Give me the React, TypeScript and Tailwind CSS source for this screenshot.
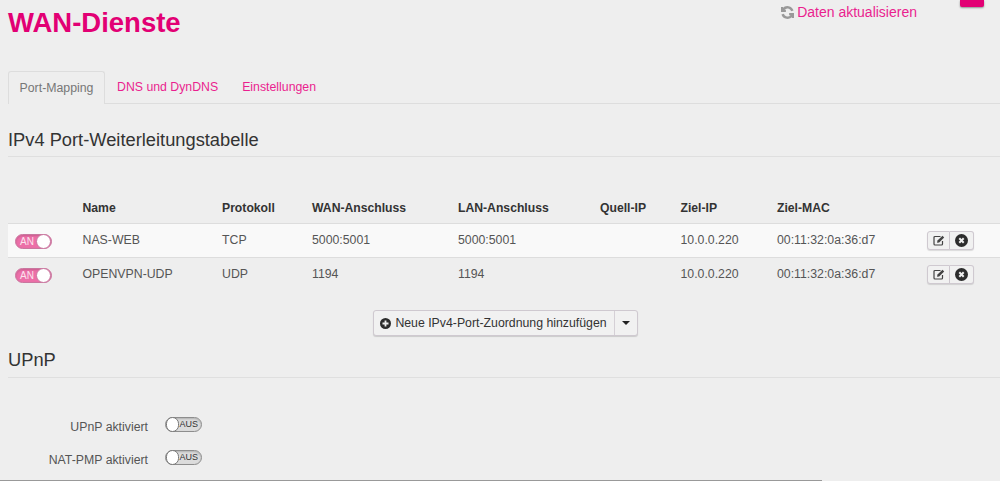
import React from "react";

const cols = "grid grid-cols-[74.5px_139.5px_90px_146px_142px_80.5px_96.5px_150px_1fr]";

function SwitchOn() {
  return (
    <div className="ml-[7px] mt-[2px] flex h-[15px] w-[37px] items-center justify-between rounded-full border border-[#c9779f] bg-[#ec6fa8] pl-[4px] shadow-[inset_0_1px_2px_rgba(0,0,0,0.15)]">
      <span className="text-[10px] leading-none text-[#fbe3ee]">AN</span>
      <span className="h-[15px] w-[15px] rounded-full border border-[#c9779f] bg-white" />
    </div>
  );
}

function SwitchOff() {
  return (
    <div className="flex h-[15px] w-[37px] items-center justify-between rounded-full border border-[#8d8d8d] bg-[#dcdcdc] pr-[3px] shadow-[inset_0_1px_2px_rgba(0,0,0,0.2)]">
      <span className="h-[15px] w-[15px] rounded-full border border-[#777] bg-white" />
      <span className="text-[9px] leading-none text-[#333]">AUS</span>
    </div>
  );
}

function EditIcon() {
  return (
    <svg width="12" height="11" viewBox="0 0 12 11" fill="none">
      <path d="M7.5 1.500H2A1 1 0 0 0 1 2.500V9a1 1 0 0 0 1 1h6.500a1 1 0 0 0 1-1V6" stroke="#444" strokeWidth="1.200" />
      <path d="M4.500 5.500 9.500 0.800 11.200 2.400 6.200 7.400 4 7.800Z" fill="#444" />
    </svg>
  );
}

function CloseIcon() {
  return (
    <svg width="13" height="13" viewBox="0 0 13 13">
      <circle cx="6.500" cy="6.500" r="6.500" fill="#2c2c2c" />
      <path d="M4.300 4.300 8.700 8.700M8.700 4.300 4.300 8.700" stroke="#eee" strokeWidth="2" />
    </svg>
  );
}

function ActionButtons() {
  return (
    <div className="flex">
      <button className="flex h-[19px] w-[23px] items-center justify-center rounded-l-[3px] border border-[#cfc9d0] bg-[#f1f1f1] shadow-[0_1px_1px_rgba(0,0,0,0.12)]">
        <EditIcon />
      </button>
      <button className="flex h-[19px] w-[24px] items-center justify-center rounded-r-[3px] border border-l-0 border-[#cfc9d0] bg-[#f1f1f1] shadow-[0_1px_1px_rgba(0,0,0,0.12)]">
        <CloseIcon />
      </button>
    </div>
  );
}

function Row({ name, proto, wan, lan, light }: { name: string; proto: string; wan: string; lan: string; light?: boolean }) {
  return (
    <div className={`${cols} h-[34px] items-center border-t border-[#dddddd] text-[12.3px] text-[#555] ${light ? "bg-[#f9f9f9]" : ""}`}>
      <SwitchOn />
      <span>{name}</span>
      <span>{proto}</span>
      <span>{wan}</span>
      <span>{lan}</span>
      <span />
      <span>10.0.0.220</span>
      <span>00:11:32:0a:36:d7</span>
      <ActionButtons />
    </div>
  );
}

export default function App() {
  return (
    <div className="h-[481px] w-[1000px] overflow-hidden bg-[#eeeeee] font-['Liberation_Sans',Arial,sans-serif]">
      <div className="h-[480px] pl-2">
        <header className="flex h-[71px] items-start justify-between">
          <h1 className="mt-[5px] text-[27.5px] font-bold leading-[36px] text-[#e20074]">WAN-Dienste</h1>
          <div className="flex items-start">
            <a className="mt-[3px] flex items-center gap-[3px] text-sm leading-[18px] text-[#ea1f8f]">
              <svg width="13" height="13" viewBox="0 0 24 24" fill="none" stroke="#999" strokeWidth="4.500">
                <path d="M21 9a9.500 9.500 0 0 0-16.500-3L2 9" />
                <path d="M2 2v7h7" />
                <path d="M3 15a9.500 9.500 0 0 0 16.500 3l2.500-3" />
                <path d="M22 22v-7h-7" />
              </svg>
              Daten aktualisieren
            </a>
            <div className="ml-[43px] mr-4 h-[7px] w-6 rounded-b-[2px] bg-[#e20074] shadow-[0_1px_2px_rgba(0,0,0,0.4)]" />
          </div>
        </header>

        <nav className="flex h-[33px] border-b border-[#dddddd] text-[12.3px]">
          <a className="-mb-px flex h-[33px] w-[97px] items-center justify-center rounded-t-[3px] border border-b-0 border-[#dddddd] bg-[#eeeeee] text-[#777]">
            Port-Mapping
          </a>
          <a className="ml-[12px] flex items-center text-[#ea1f8f]">DNS und DynDNS</a>
          <a className="ml-[24px] flex items-center text-[#ea1f8f]">Einstellungen</a>
        </nav>

        <h2 className="mt-[24px] border-b border-[#dfdfdf] pb-[4px] text-[18.3px] leading-[24px] text-[#333]">
          IPv4 Port-Weiterleitungstabelle
        </h2>

        <div className="mt-[35px]">
          <div className={`${cols} h-[31px] items-center pt-[2px] text-[12.2px] font-bold text-[#333]`}>
            <span />
            <span>Name</span>
            <span>Protokoll</span>
            <span>WAN-Anschluss</span>
            <span>LAN-Anschluss</span>
            <span>Quell-IP</span>
            <span>Ziel-IP</span>
            <span>Ziel-MAC</span>
            <span />
          </div>
          <Row name="NAS-WEB" proto="TCP" wan="5000:5001" lan="5000:5001" light />
          <Row name="OPENVPN-UDP" proto="UDP" wan="1194" lan="1194" />
        </div>

        <div className="mt-[19px] flex justify-center pl-[2px]">
          <div className="flex h-[26px] rounded-[3px] border border-[#cfc9d0] bg-[#f1f1f1] text-[12.3px] text-[#333] shadow-[0_1px_1px_rgba(0,0,0,0.15)]">
            <button className="flex w-[241px] items-center justify-center gap-[4px] border-r border-[#d5d0d6]">
              <svg width="11" height="11" viewBox="0 0 11 11">
                <circle cx="5.500" cy="5.500" r="5.500" fill="#2c2c2c" />
                <path d="M5.500 2.500v6M2.500 5.500h6" stroke="#eee" strokeWidth="1.800" />
              </svg>
              Neue IPv4-Port-Zuordnung hinzufügen
            </button>
            <button className="flex w-[22px] items-center justify-center">
              <span className="border-x-[4px] border-t-[4px] border-x-transparent border-t-[#222]" />
            </button>
          </div>
        </div>

        <h2 className="mt-[12px] border-b border-[#dfdfdf] pb-[5px] text-[18.3px] leading-[24px] text-[#333]">UPnP</h2>

        <div className="mt-[39px] flex flex-col gap-[18px] text-[12.3px] text-[#555]">
          <div className="flex h-[15px] items-center">
            <span className="mt-[6px] w-[140px] text-right">UPnP aktiviert</span>
            <div className="ml-[17px]"><SwitchOff /></div>
          </div>
          <div className="flex h-[15px] items-center">
            <span className="mt-[6px] w-[140px] text-right">NAT-PMP aktiviert</span>
            <div className="ml-[17px]"><SwitchOff /></div>
          </div>
        </div>
      </div>
      <div className="h-px w-[822px] bg-[#999]" />
    </div>
  );
}
